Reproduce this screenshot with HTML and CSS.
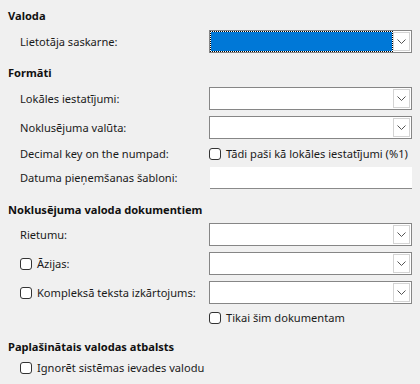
FILE: index.html
```html
<!DOCTYPE html>
<html lang="lv">
<head>
<meta charset="utf-8">
<link rel="stylesheet" href="styles.css">
</head>
<body>
<div class="page">
  <div class="title t1">Valoda</div>
  <div class="row r-combo g6">
    <span class="label">Lietotāja saskarne:</span>
    <div class="combo focused"><div class="field"></div><div class="btn"><svg width="9" height="5" viewBox="0 0 9 5"><path d="M0.5 0.5 L4.5 4.5 L8.5 0.5" fill="none" stroke="#555" stroke-width="1"/></svg></div></div>
  </div>

  <div class="title g12">Formāti</div>
  <div class="row r-combo g6">
    <span class="label">Lokāles iestatījumi:</span>
    <div class="combo"><div class="field"></div><div class="btn"><svg width="9" height="5" viewBox="0 0 9 5"><path d="M0.5 0.5 L4.5 4.5 L8.5 0.5" fill="none" stroke="#555" stroke-width="1"/></svg></div></div>
  </div>
  <div class="row r-combo g6">
    <span class="label">Noklusējuma valūta:</span>
    <div class="combo"><div class="field"></div><div class="btn"><svg width="9" height="5" viewBox="0 0 9 5"><path d="M0.5 0.5 L4.5 4.5 L8.5 0.5" fill="none" stroke="#555" stroke-width="1"/></svg></div></div>
  </div>
  <div class="row r-check g7">
    <span class="label">Decimal key on the numpad:</span>
    <label class="check"><span class="box"></span>Tādi paši kā lokāles iestatījumi (%1)</label>
  </div>
  <div class="row r-entry g5">
    <span class="label">Datuma pieņemšanas šabloni:</span>
    <div class="entry"></div>
  </div>

  <div class="title g13">Noklusējuma valoda dokumentiem</div>
  <div class="row r-combo g5">
    <span class="label">Rietumu:</span>
    <div class="combo"><div class="field"></div><div class="btn"><svg width="9" height="5" viewBox="0 0 9 5"><path d="M0.5 0.5 L4.5 4.5 L8.5 0.5" fill="none" stroke="#555" stroke-width="1"/></svg></div></div>
  </div>
  <div class="row r-combo g6">
    <label class="check"><span class="box"></span>Āzijas:</label>
    <div class="combo"><div class="field"></div><div class="btn"><svg width="9" height="5" viewBox="0 0 9 5"><path d="M0.5 0.5 L4.5 4.5 L8.5 0.5" fill="none" stroke="#555" stroke-width="1"/></svg></div></div>
  </div>
  <div class="row r-combo g6">
    <label class="check"><span class="box"></span>Kompleksā teksta izkārtojums:</label>
    <div class="combo"><div class="field"></div><div class="btn"><svg width="9" height="5" viewBox="0 0 9 5"><path d="M0.5 0.5 L4.5 4.5 L8.5 0.5" fill="none" stroke="#555" stroke-width="1"/></svg></div></div>
  </div>
  <div class="row r-check g6">
    <span class="label"></span>
    <label class="check"><span class="box"></span>Tikai šim dokumentam</label>
  </div>

  <div class="title g13">Paplašinātais valodas atbalsts</div>
  <div class="row r-check g5">
    <label class="check"><span class="box"></span>Ignorēt sistēmas ievades valodu</label>
  </div>
</div>
</body>
</html>
```

FILE: styles.css
```css
html, body {
  margin: 0;
  padding: 0;
  background: #f0f0f0;
}
body {
  font-family: "Noto Sans", "Open Sans", sans-serif;
  font-size: 11.1px;
  color: #1a1a1a;
  width: 420px;
  height: 384px;
  overflow: hidden;
}
.page {
  padding-top: 8px;
  display: flex;
  flex-direction: column;
}
.title {
  height: 16px;
  line-height: 16px;
  padding-left: 8px;
  font-weight: 700;
  color: #111;
}
.row {
  display: grid;
  grid-template-columns: 189px 203px;
  align-items: center;
  padding-left: 20px;
}
.r-combo { height: 23px; }
.r-check { height: 16px; }
.r-entry { height: 22px; }
.g5 { margin-top: 5px; }
.g6 { margin-top: 6px; }
.g7 { margin-top: 7px; }
.g12 { margin-top: 12px; }
.g13 { margin-top: 13px; }
.label {
  white-space: nowrap;
  line-height: 16px;
}
.combo {
  box-sizing: border-box;
  height: 23px;
  border: 1px solid #868686;
  background: #fff;
  display: flex;
  padding: 1px;
}
.combo .field {
  flex: 1;
}
.combo.focused .field {
  background: #0078d7;
  outline: 1px dotted #000;
  outline-offset: 0;
  margin-right: 1px;
}
.combo .btn {
  box-sizing: border-box;
  width: 17px;
  border: 1px solid #d4d4d4;
  background: #fff;
  display: flex;
  align-items: center;
  justify-content: center;
}
.combo .btn svg { display: block; }
.entry {
  box-sizing: border-box;
  height: 22px;
  background: #fff;
  border-bottom: 1px solid #8a8a8a;
  margin-left: 1px;
}
.check {
  display: flex;
  align-items: center;
  white-space: nowrap;
  line-height: 16px;
}
.box {
  box-sizing: border-box;
  width: 12px;
  height: 12px;
  border: 1px solid #333;
  border-radius: 3px;
  background: #fff;
  margin-right: 5px;
  flex: none;
}
```
